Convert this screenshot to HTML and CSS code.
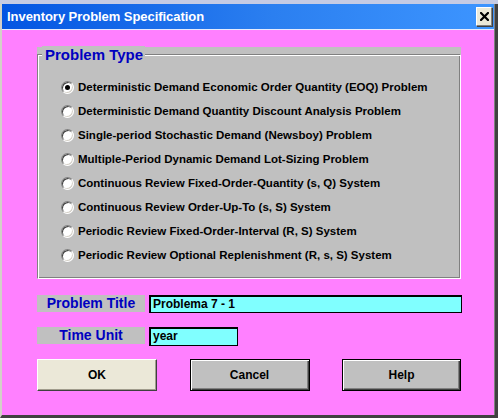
FILE: index.html
```html
<!DOCTYPE html>
<html>
<head>
<meta charset="utf-8">
<link rel="stylesheet" href="styles.css">
</head>
<body>
<div class="backdrop"></div>
<div class="window">
  <div class="titlebar">
    <span class="title">Inventory Problem Specification</span>
    <span class="close">
      <svg width="9" height="9" viewBox="0 0 9 9"><path d="M1 1 L8 8 M8 1 L1 8" stroke="#000" stroke-width="2.2" stroke-linecap="square"/></svg>
    </span>
  </div>
  <div class="content">
    <div class="panel">
      <div class="groove">
        <span class="legend">Problem Type</span>
        <div class="radios">
          <div class="radio-row"><span class="radio checked"></span><span>Deterministic Demand Economic Order Quantity (EOQ) Problem</span></div>
          <div class="radio-row"><span class="radio"></span><span>Deterministic Demand Quantity Discount Analysis Problem</span></div>
          <div class="radio-row"><span class="radio"></span><span>Single-period Stochastic Demand (Newsboy) Problem</span></div>
          <div class="radio-row"><span class="radio"></span><span>Multiple-Period Dynamic Demand Lot-Sizing Problem</span></div>
          <div class="radio-row"><span class="radio"></span><span>Continuous Review Fixed-Order-Quantity (s, Q) System</span></div>
          <div class="radio-row"><span class="radio"></span><span>Continuous Review Order-Up-To (s, S) System</span></div>
          <div class="radio-row"><span class="radio"></span><span>Periodic Review Fixed-Order-Interval (R, S) System</span></div>
          <div class="radio-row"><span class="radio"></span><span>Periodic Review Optional Replenishment (R, s, S) System</span></div>
        </div>
      </div>
    </div>
    <div class="field-row row-title">
      <div class="label">Problem Title</div>
      <div class="input input-wide">Problema 7 - 1</div>
    </div>
    <div class="field-row row-unit">
      <div class="label">Time Unit</div>
      <div class="input input-short">year</div>
    </div>
    <div class="buttons">
      <div class="btn btn-ok">OK</div>
      <div class="btn btn-gray">Cancel</div>
      <div class="btn btn-gray btn-help">Help</div>
    </div>
  </div>
</div>
</body>
</html>
```
FILE: styles.css
```css
* { box-sizing: border-box; }
html, body { margin: 0; padding: 0; }
body {
  width: 498px;
  height: 418px;
  overflow: hidden;
  background: #c9cee3;
  font-family: "Liberation Sans", Arial, sans-serif;
}
.backdrop {
  height: 4px;
  background: #c5cbe4;
}
.window {
  width: 498px;
  height: 414px;
  background: #d4d0c8;
  border-left: 2px solid #d4d0c8;
  border-right: 3px solid #404040;
  border-bottom: 3px solid #404040;
  box-shadow: inset -1px -1px 0 #808080;
  display: flex;
  flex-direction: column;
}
.titlebar {
  height: 26px;
  background: linear-gradient(to right, #0355e2, #2b7ff0 55%, #3d95ff);
  border-bottom: 1px solid #e6ecff;
  display: flex;
  align-items: center;
  justify-content: space-between;
  padding: 0 2px 0 5px;
  margin-right: 1px;
}
.title {
  color: #fff;
  font-weight: bold;
  font-size: 13px;
  letter-spacing: -0.05px;
}
.close {
  width: 16px;
  height: 19px;
  background: #ece9d8;
  border-top: 1px solid #fff;
  border-left: 1px solid #fff;
  border-right: 1px solid #808080;
  border-bottom: 1px solid #808080;
  box-shadow: 1px 1px 0 #404040;
  display: flex;
  align-items: center;
  justify-content: center;
}
.content {
  flex: 1;
  background: #ff80ff;
  margin-right: 1px;
  padding: 17px 0 0 35px;
  display: flex;
  flex-direction: column;
}
.panel {
  width: 424px;
  height: 232px;
  background: #c0c0c0;
  padding-top: 7px;
}
.groove {
  position: relative;
  height: 225px;
  border-top: 1px solid #808080;
  border-left: 1px solid #808080;
  border-right: 1px solid #fff;
  border-bottom: 1px solid #fff;
  box-shadow: inset 1px 1px 0 #fff, inset -1px -1px 0 #808080;
  padding: 20px 0 0 23px;
}
.legend {
  position: absolute;
  left: 4px;
  top: -9px;
  background: #c0c0c0;
  color: #0000c0;
  font-weight: bold;
  font-size: 15px;
  line-height: 17px;
  padding: 0 2px 0 3px;
}
.radios {
  display: flex;
  flex-direction: column;
}
.radio-row {
  height: 24px;
  display: flex;
  align-items: center;
  gap: 4px;
  font-size: 11.5px;
  font-weight: bold;
  color: #000;
}
.radio {
  width: 13px;
  height: 13px;
  border-radius: 50%;
  background: #fff;
  border: 1px solid #808080;
  border-right-color: #fff;
  border-bottom-color: #fff;
  box-shadow: inset 1px 1px 0 #404040, inset -1px -1px 0 #d4d0c8;
  display: flex;
  align-items: center;
  justify-content: center;
  flex: none;
}
.radio.checked::after {
  content: "";
  width: 5px;
  height: 5px;
  border-radius: 50%;
  background: #000;
}
.field-row {
  display: flex;
  align-items: flex-start;
  gap: 4px;
}
.row-title { margin-top: 16px; }
.row-unit { margin-top: 14px; }
.label {
  width: 108px;
  height: 17px;
  background: #c0c0c0;
  color: #0000c0;
  font-weight: bold;
  font-size: 14px;
  line-height: 17px;
  text-align: center;
}
.input {
  height: 18px;
  background: #80ffff;
  border: 1px solid #000;
  box-shadow: inset 1px 1px 0 #000;
  font-size: 12px;
  font-weight: bold;
  line-height: 16px;
  padding-left: 3px;
  color: #000;
}
.input-wide { width: 313px; }
.input-short { width: 89px; height: 19px; }
.buttons {
  margin-top: 13px;
  width: 424px;
  display: flex;
  justify-content: space-between;
}
.btn {
  width: 120px;
  height: 32px;
  display: flex;
  align-items: center;
  justify-content: center;
  font-weight: bold;
  font-size: 12px;
  color: #000;
}
.btn-ok {
  background: #ebe8d8;
  border-top: 1px solid #fff;
  border-left: 1px solid #fff;
  border-right: 1px solid #404040;
  border-bottom: 1px solid #404040;
  box-shadow: inset -1px -1px 0 #a09c8c;
}
.btn-gray {
  background: #c0c0c0;
  border: 1px solid #000;
  box-shadow: inset 1px 1px 0 #fff, inset -1px -1px 0 #404040, inset -2px -2px 0 #808080;
}
.btn-help { width: 119px; }
```
